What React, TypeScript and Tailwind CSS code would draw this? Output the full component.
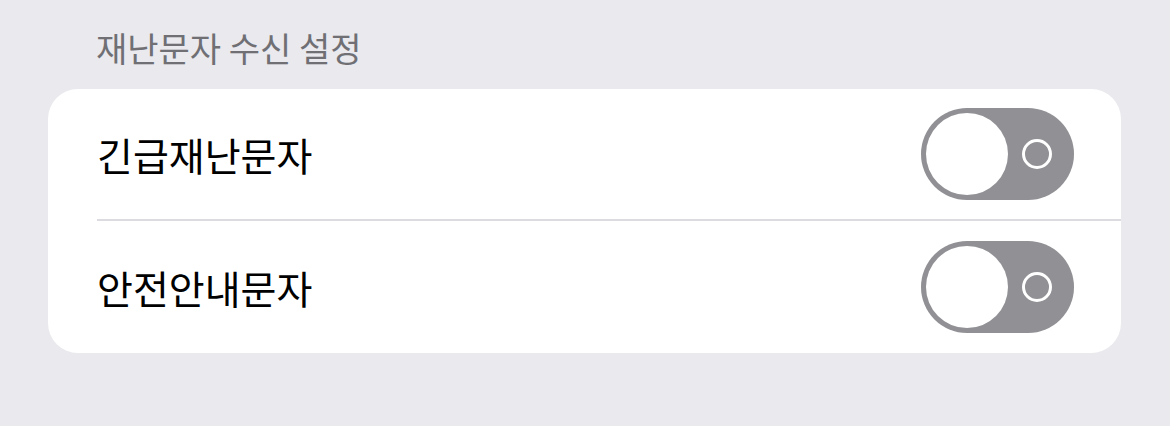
import React from 'react'

function Toggle() {
  return (
    <div className="flex h-[92px] w-[153px] shrink-0 items-center rounded-full bg-[#909095] pl-[5px]">
      <div className="h-[82px] w-[82px] rounded-full bg-white" />
      <div className="ml-[14px] h-[30px] w-[30px] rounded-full border-[3px] border-white" />
    </div>
  )
}

const rows = ['긴급재난문자', '안전안내문자']

export default function App() {
  return (
    <div
      className="h-[426px] w-[1170px] bg-[#e9e9ee] pl-[48px] pr-[49px] pt-[26px]"
      style={{ fontFamily: '"Noto Sans CJK KR", "Noto Sans", sans-serif' }}
    >
      <div className="pl-[48px] text-[34px] leading-[44px] text-[#6f6f74]">재난문자 수신 설정</div>
      <div className="mt-[19px] overflow-hidden rounded-[30px] bg-white">
        {rows.map((label, i) => (
          <div key={label} className="pl-[49px]">
            <div
              className={
                'flex h-[132px] items-center justify-between pr-[47px] ' +
                (i === 0 ? 'border-b-2 border-[#dcdce0]' : '')
              }
            >
              <span className="text-[39px] text-black">{label}</span>
              <Toggle />
            </div>
          </div>
        ))}
      </div>
    </div>
  )
}
